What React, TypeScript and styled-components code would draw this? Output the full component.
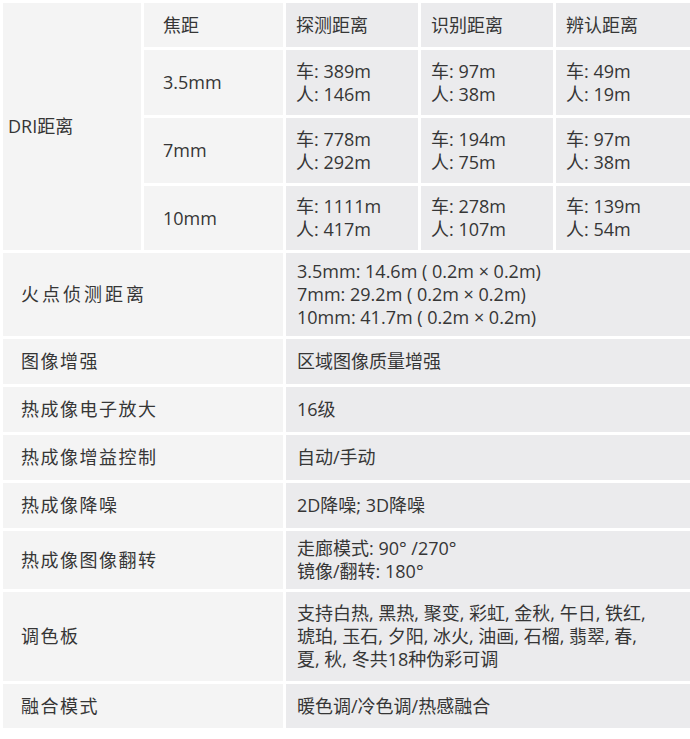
import React from 'react';
import styled, { createGlobalStyle } from 'styled-components';

const GlobalStyle = createGlobalStyle`
  html, body {
    margin: 0;
    padding: 0;
    background: #ffffff;
  }
  body {
    font-family: "Open Sans", "Noto Sans CJK SC", sans-serif;
    color: #363636;
  }
`;

const Sheet = styled.div`
  display: grid;
  grid-template-columns: 138px 139px 132px 132px 134px;
  grid-template-rows: 44px 65px 65px 64px 83px 45px 45px 45px 45px 58px 89px 44px;
  gap: 3px;
  padding: 3px 0 0 3px;
  width: 690px;
  overflow: hidden;
  box-sizing: border-box;
`;

const Cell = styled.div<{ $tone: 'light' | 'dark'; $padLeft: number; $spacing?: number }>`
  display: flex;
  flex-direction: column;
  justify-content: center;
  padding-left: ${({ $padLeft }) => $padLeft}px;
  background: ${({ $tone }) => ($tone === 'light' ? '#f4f4f4' : '#ebebed')};
  font-size: 18px;
  line-height: 23px;
  letter-spacing: ${({ $spacing }) => $spacing || 0}px;
  white-space: nowrap;
  overflow: hidden;
`;

const DriCell = styled(Cell)`
  grid-row: 1 / span 4;
`;

const LabelCell = styled(Cell)`
  grid-column: 1 / span 2;
`;

const ValueCell = styled(Cell)`
  grid-column: 3 / span 3;
`;

const Line = styled.span`
  display: block;
`;

const heads = ['探测距离', '识别距离', '辨认距离'];

const dri = [
  { focal: '3.5mm', values: [['389m', '146m'], ['97m', '38m'], ['49m', '19m']] },
  { focal: '7mm', values: [['778m', '292m'], ['194m', '75m'], ['97m', '38m']] },
  { focal: '10mm', values: [['1111m', '417m'], ['278m', '107m'], ['139m', '54m']] },
];

const specs = [
  {
    label: '火点侦测距离',
    spacing: 3,
    lines: ['3.5mm: 14.6m ( 0.2m × 0.2m)', '7mm: 29.2m ( 0.2m × 0.2m)', '10mm: 41.7m ( 0.2m × 0.2m)'],
  },
  { label: '图像增强', spacing: 1.5, lines: ['区域图像质量增强'] },
  { label: '热成像电子放大', spacing: 1.5, lines: ['16级'] },
  { label: '热成像增益控制', spacing: 1.5, lines: ['自动/手动'] },
  { label: '热成像降噪', spacing: 1.5, lines: ['2D降噪; 3D降噪'] },
  { label: '热成像图像翻转', spacing: 1.5, lines: ['走廊模式: 90° /270°', '镜像/翻转: 180°'] },
  {
    label: '调色板',
    spacing: 1.5,
    lines: [
      '支持白热, 黑热, 聚变, 彩虹, 金秋, 午日, 铁红,',
      '琥珀, 玉石, 夕阳, 冰火, 油画, 石榴, 翡翠, 春,',
      '夏, 秋, 冬共18种伪彩可调',
    ],
  },
  { label: '融合模式', spacing: 1.5, lines: ['暖色调/冷色调/热感融合'] },
];

const App = () => {
  return (
    <>
      <GlobalStyle />
      <Sheet>
        <DriCell $tone="light" $padLeft={5}>DRI距离</DriCell>
        <Cell $tone="light" $padLeft={19}>焦距</Cell>
        {heads.map((h) => (
          <Cell key={h} $tone="dark" $padLeft={10}>
            {h}
          </Cell>
        ))}
        {dri.map((row) => (
          <React.Fragment key={row.focal}>
            <Cell $tone="light" $padLeft={19}>
              {row.focal}
            </Cell>
            {row.values.map(([car, person], i) => (
              <Cell key={i} $tone="dark" $padLeft={10}>
                <Line>车: {car}</Line>
                <Line>人: {person}</Line>
              </Cell>
            ))}
          </React.Fragment>
        ))}
        {specs.map((s) => (
          <React.Fragment key={s.label}>
            <LabelCell $tone="light" $padLeft={18} $spacing={s.spacing}>
              {s.label}
            </LabelCell>
            <ValueCell $tone="dark" $padLeft={11}>
              {s.lines.map((l) => (
                <Line key={l}>{l}</Line>
              ))}
            </ValueCell>
          </React.Fragment>
        ))}
      </Sheet>
    </>
  );
};

export default App;
